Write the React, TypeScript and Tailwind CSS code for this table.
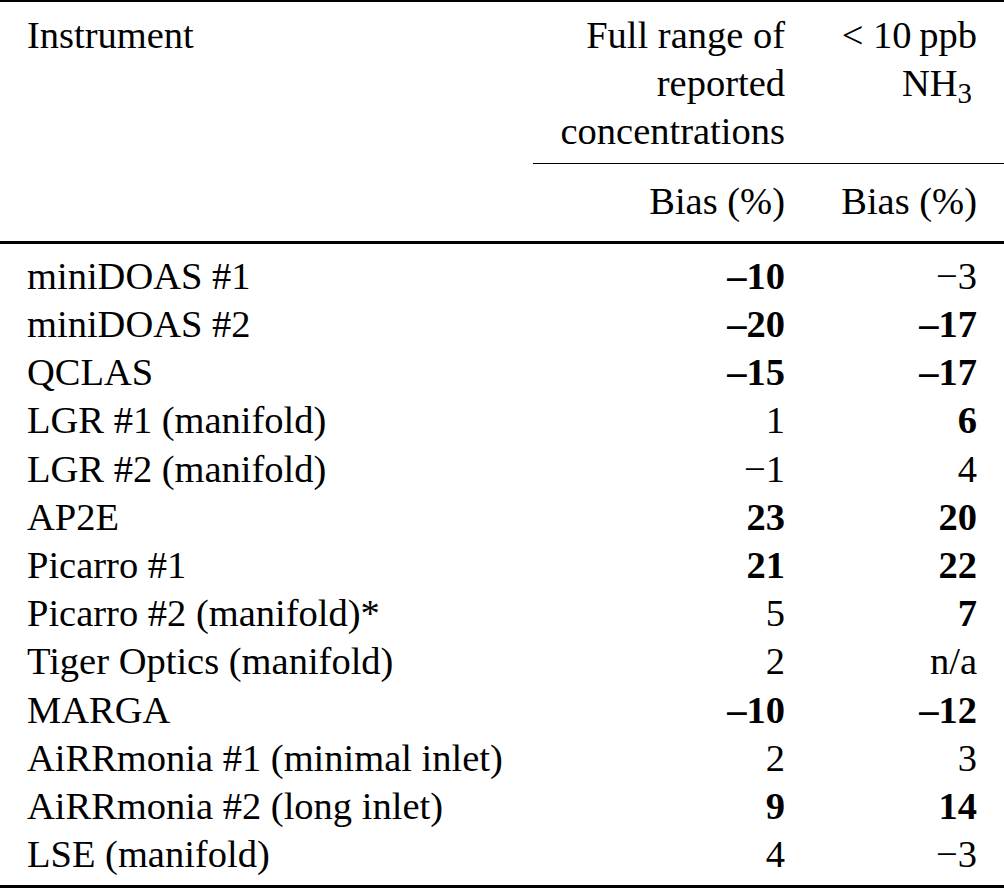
import React from 'react';

type Row = {
  name: string;
  full: string;
  fullBold?: boolean;
  low: string;
  lowBold?: boolean;
};

const rows: Row[] = [
  { name: 'miniDOAS #1', full: '–10', fullBold: true, low: '−3' },
  { name: 'miniDOAS #2', full: '–20', fullBold: true, low: '–17', lowBold: true },
  { name: 'QCLAS', full: '–15', fullBold: true, low: '–17', lowBold: true },
  { name: 'LGR #1 (manifold)', full: '1', low: '6', lowBold: true },
  { name: 'LGR #2 (manifold)', full: '−1', low: '4' },
  { name: 'AP2E', full: '23', fullBold: true, low: '20', lowBold: true },
  { name: 'Picarro #1', full: '21', fullBold: true, low: '22', lowBold: true },
  { name: 'Picarro #2 (manifold)*', full: '5', low: '7', lowBold: true },
  { name: 'Tiger Optics (manifold)', full: '2', low: 'n/a' },
  { name: 'MARGA', full: '–10', fullBold: true, low: '–12', lowBold: true },
  { name: 'AiRRmonia #1 (minimal inlet)', full: '2', low: '3' },
  { name: 'AiRRmonia #2 (long inlet)', full: '9', fullBold: true, low: '14', lowBold: true },
  { name: 'LSE (manifold)', full: '4', low: '−3' },
];

const grid = 'grid grid-cols-[506px_252px_192px] px-[27px]';

export default function App() {
  return (
    <div className="w-[1004px] h-[888px] bg-white text-black [font-family:'Liberation_Serif',serif] text-[38.5px] leading-[48.2px]">
      {/* top rule */}
      <div className="h-[2px] bg-black" />

      {/* header */}
      <div className={`${grid} pt-[9px] pb-[7px]`}>
        <div>Instrument</div>
        <div className="text-right">
          <div>Full range of</div>
          <div>reported</div>
          <div>concentrations</div>
        </div>
        <div className="text-right">
          <div>&lt; 10{'\u2009'}ppb</div>
          <div className="pr-[5px]">
            NH<sub>3</sub>
          </div>
        </div>
      </div>

      {/* cmidrule over cols 2-3 */}
      <div className="h-[1.5px] ml-[533px] bg-black" />

      <div className={`${grid} pt-[12.5px] pb-[16.5px]`}>
        <div />
        <div className="text-right">Bias (%)</div>
        <div className="text-right">Bias (%)</div>
      </div>

      <div className="h-[2.5px] bg-black" />

      {/* body */}
      <div className="pt-[8px] pb-[7px]">
        {rows.map((r) => (
          <div key={r.name} className={grid}>
            <div>{r.name}</div>
            <div className={`text-right ${r.fullBold ? 'font-bold' : ''}`}>{r.full}</div>
            <div className={`text-right ${r.lowBold ? 'font-bold' : ''}`}>{r.low}</div>
          </div>
        ))}
      </div>

      {/* bottom rule */}
      <div className="h-[3px] bg-black" />
    </div>
  );
}
